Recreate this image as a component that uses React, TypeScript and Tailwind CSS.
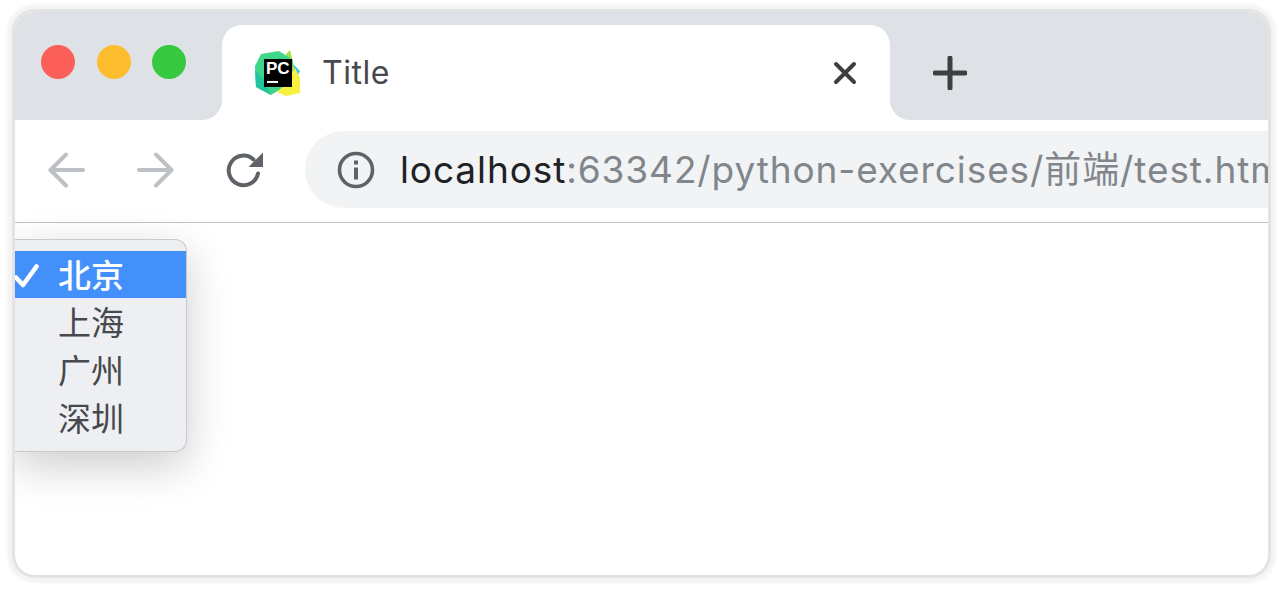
const menuItems = ['北京', '上海', '广州', '深圳'];

function PyCharmLogo() {
  return (
    <div className="relative w-[46px] h-[46px] shrink-0">
      <svg viewBox="0 0 46 46" className="absolute inset-0 w-full h-full">
        <polygon points="34,10 45,21 41,29 30,20" fill="#3fc3e8" />
        <polygon points="31,4 35,0 40,20 30,20" fill="#a6df4a" />
        <polygon points="22,42 40,18 45,28 45,43 31,46" fill="#f7f13f" />
        <polygon points="6,4 24,1 38,10 36,30 24,40 16,45 1,37 0,16" fill="#3fd58a" />
        <polygon points="1,37 0,20 9,30 16,45" fill="#22c3a0" />
        <rect x="9" y="9" width="28" height="28" fill="#000000" />
        <rect x="12" y="31" width="11" height="2" fill="#ffffff" />
      </svg>
      <span className="absolute left-[11px] top-[10px] text-[17px] leading-[18px] font-bold text-white font-['Liberation_Sans',sans-serif]">
        PC
      </span>
    </div>
  );
}

function TrafficLight({ className }: { className: string }) {
  return <div className={`w-[34px] h-[34px] rounded-full ${className}`} />;
}

function NavArrow({ flip }: { flip?: boolean }) {
  return (
    <svg viewBox="0 0 38 36" className={`w-[38px] h-[36px] ${flip ? 'rotate-180' : ''}`}>
      <path d="M36 18H4M19 2.5 3.5 18 19 33.5" fill="none" stroke="#bdc0c4" strokeWidth="4" strokeLinecap="round" strokeLinejoin="round" />
    </svg>
  );
}

export default function App() {
  return (
    <div className="w-[1283px] h-[589px] bg-white px-[15px] pt-[12px] font-['Inter','Noto_Sans_CJK_SC',sans-serif]">
      <div className="relative w-[1253px] h-[563px] rounded-[20px] bg-white shadow-[0_0_1px_3px_#e3e3e3,0_0_3px_8px_#f4f4f4]">
        <div className="h-full w-full rounded-[20px] overflow-hidden relative">
          {/* Tab strip */}
          <div className="flex h-[108px] bg-white">
            <div className="w-[207px] rounded-br-[20px] bg-[#dee1e6] flex items-center gap-[21.5px] pl-[26px] pb-[8px]">
              <TrafficLight className="bg-[#fc5f57]" />
              <TrafficLight className="bg-[#fdbd2e]" />
              <TrafficLight className="bg-[#36c83f]" />
            </div>
            <div className="w-[668px] flex flex-col bg-[#dee1e6]">
              <div className="h-[13px]" />
              <div className="flex-1 bg-white rounded-t-[20px] flex items-center pl-[33px] pr-[33px]">
                <PyCharmLogo />
                <span className="ml-[21px] text-[32px] tracking-[0.5px] text-[#47494d]">Title</span>
                <svg viewBox="0 0 24 24" className="ml-auto w-[24px] h-[24px]">
                  <path d="M3 3 21 21M21 3 3 21" stroke="#3c4043" strokeWidth="4" strokeLinecap="round" />
                </svg>
              </div>
            </div>
            <div className="flex-1 rounded-bl-[20px] bg-[#dee1e6] flex items-center pl-[43px] pt-[14px]">
              <svg viewBox="0 0 34 34" className="w-[34px] h-[34px]">
                <path d="M17 2V32M2 17H32" stroke="#3c4043" strokeWidth="5" strokeLinecap="round" />
              </svg>
            </div>
          </div>

          {/* Toolbar */}
          <div className="h-[103px] border-b border-[#c4c4c4] bg-white flex items-start">
            <div className="flex items-center w-[290px] h-[77px] mt-[11px] shrink-0 pl-[32px]">
              <NavArrow />
              <div className="w-[52px]" />
              <NavArrow flip />
              <svg viewBox="0 0 38 36" className="ml-[51px] w-[38px] h-[36px]">
                <path d="M32 21.5A14.8 14.8 0 1 1 27.5 7.5" fill="none" stroke="#5f6368" strokeWidth="4" strokeLinecap="round" />
                <polygon points="37,0.5 37,15 22.5,15" fill="#5f6368" />
              </svg>
            </div>
            <div className="flex-1 h-[77px] mt-[11px] rounded-l-full bg-[#f1f3f4] flex items-center pl-[32px] overflow-hidden whitespace-nowrap">
              <svg viewBox="0 0 38 38" className="w-[38px] h-[38px] shrink-0">
                <circle cx="19" cy="19" r="16.5" fill="none" stroke="#5f6368" strokeWidth="3.6" />
                <rect x="17" y="16.5" width="4" height="12" fill="#5f6368" />
                <rect x="17" y="9.5" width="4" height="4" fill="#5f6368" />
              </svg>
              <div className="ml-[25px] text-[37px] tracking-[0.9px] text-[#80868b]">
                <span className="text-[#202124]">localhost</span>:63342/python-exercises/前端/test.html
              </div>
            </div>
          </div>

          {/* Select dropdown, hangs over the page */}
          <div className="absolute left-0 top-[227px] w-[172px] h-[213px] pt-[11px] bg-[#eeeff2] rounded-r-[12px] border border-l-0 border-[#c9c9c9] shadow-[0_14px_44px_rgba(0,0,0,0.2)] font-['Noto_Sans_CJK_SC',sans-serif]">
            {menuItems.map((item, i) => (
              <div
                key={item}
                className={`flex items-center pl-[43px] text-[33px] ${i === 0 ? 'relative h-[47px] bg-[#4490fb] text-white font-medium' : 'h-[48px] text-[#47494d]'}`}
              >
                {i === 0 && (
                  <svg viewBox="0 0 26 26" className="absolute left-[-2px] top-[12px] w-[26px] h-[26px]">
                    <path d="M3 14.5 10 22 23.5 3.5" fill="none" stroke="#ffffff" strokeWidth="4.6" strokeLinecap="round" strokeLinejoin="round" />
                  </svg>
                )}
                {item}
              </div>
            ))}
          </div>
        </div>
      </div>
    </div>
  );
}
